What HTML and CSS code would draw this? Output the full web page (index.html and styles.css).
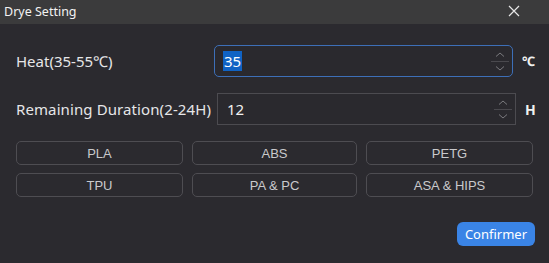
FILE: index.html
```html
<!DOCTYPE html>
<html>
<head>
<meta charset="utf-8">
<link rel="stylesheet" href="styles.css">
</head>
<body>
<div class="window">
  <div class="titlebar">
    <span class="title">Drye Setting</span>
    <svg class="close" width="12" height="12" viewBox="0 0 12 12"><path d="M1 1 L11 11 M11 1 L1 11" stroke="#e6e6e6" stroke-width="1.2" fill="none"/></svg>
  </div>
  <div class="content">
    <div class="row row-heat">
      <div class="label label-heat">Heat(35-55℃)</div>
      <div class="spin spin-focus">
        <span class="value"><span class="sel">35</span></span>
        <div class="arrows">
          <svg width="12" height="7" viewBox="0 0 12 7"><path d="M2 5.5 L6 2 L10 5.5" stroke="#7a7a7e" stroke-width="1" fill="none"/></svg>
          <div class="sep"></div>
          <svg width="12" height="7" viewBox="0 0 12 7"><path d="M2 1.5 L6 5 L10 1.5" stroke="#7a7a7e" stroke-width="1" fill="none"/></svg>
        </div>
      </div>
      <div class="unit">℃</div>
    </div>
    <div class="row row-dur">
      <div class="label label-dur">Remaining Duration(2-24H)</div>
      <div class="spin spin-plain">
        <span class="value">12</span>
        <div class="arrows">
          <svg width="12" height="7" viewBox="0 0 12 7"><path d="M2 5.5 L6 2 L10 5.5" stroke="#7a7a7e" stroke-width="1" fill="none"/></svg>
          <div class="sep"></div>
          <svg width="12" height="7" viewBox="0 0 12 7"><path d="M2 1.5 L6 5 L10 1.5" stroke="#7a7a7e" stroke-width="1" fill="none"/></svg>
        </div>
      </div>
      <div class="unit unit-h">H</div>
    </div>
    <div class="materials">
      <div class="mat">PLA</div>
      <div class="mat">ABS</div>
      <div class="mat">PETG</div>
      <div class="mat">TPU</div>
      <div class="mat">PA &amp; PC</div>
      <div class="mat">ASA &amp; HIPS</div>
    </div>
    <div class="footer">
      <button class="confirm">Confirmer</button>
    </div>
  </div>
</div>
</body>
</html>
```

FILE: styles.css
```css
html, body {
  margin: 0;
  padding: 0;
  background: #2b2a2f;
}
.window {
  width: 549px;
  height: 263px;
  background: #2b2a2f;
  font-family: "Noto Sans", "Open Sans", sans-serif;
  color: #e8e8ea;
  overflow: hidden;
}
.titlebar {
  height: 24px;
  background: #3b3b3c;
  display: flex;
  align-items: center;
  justify-content: space-between;
  padding: 0 29px 0 4px;
  box-sizing: border-box;
}
.title {
  font-size: 12.5px;
  color: #f2f2f2;
  position: relative;
  top: -1px;
}
.close {
  display: block;
  margin-top: -3px;
}
.content {
  padding: 21px 14px 0 16px;
}
.row {
  display: flex;
  align-items: center;
}
.row-heat {
  height: 32px;
}
.row-dur {
  height: 32px;
  margin-top: 16px;
}
.label {
  flex: none;
  font-size: 15px;
  color: #e6e6e8;
}
.label-heat { width: 198px; }
.label-dur { width: 201px; letter-spacing: 0.1px; }
.spin {
  flex: none;
  width: 299px;
  height: 32px;
  box-sizing: border-box;
  display: flex;
  align-items: center;
  background: #2a292e;
}
.spin-focus {
  border: 1px solid #3d6fb8;
  border-radius: 5px;
  padding-left: 8px;
}
.spin-plain {
  border: 1px solid #4c4b50;
  padding-left: 9px;
}
.value {
  flex: 1;
  font-size: 15px;
  color: #f0f0f0;
}
.sel {
  background: #1063c4;
  color: #ffffff;
  padding: 0 1px;
}
.arrows {
  flex: none;
  width: 20px;
  margin-right: 2px;
  display: flex;
  flex-direction: column;
  align-items: center;
  gap: 3px;
}
.arrows svg { display: block; }
.sep {
  width: 18px;
  height: 1px;
  background: #4a494e;
}
.unit {
  margin-left: 9px;
  font-size: 13px;
  font-weight: bold;
  color: #f0f0f0;
}
.unit-h { font-size: 14px; }
.materials {
  margin-top: 16px;
  width: 517px;
  display: grid;
  grid-template-columns: 167px 165px 167px;
  column-gap: 9px;
  row-gap: 8px;
}
.mat {
  height: 24px;
  box-sizing: border-box;
  border: 1px solid #4e4d52;
  border-radius: 5px;
  display: flex;
  align-items: center;
  justify-content: center;
  font-family: "Liberation Sans", Arial, sans-serif;
  font-size: 13px;
  color: #c9c9cc;
}
.footer {
  display: flex;
  justify-content: flex-end;
  width: 519px;
  margin-top: 25px;
}
.confirm {
  width: 78px;
  height: 24px;
  border: none;
  border-radius: 6px;
  background: #3a84e6;
  color: #ffffff;
  font-family: "Noto Sans", "Open Sans", sans-serif;
  font-size: 13px;
  padding: 0;
}
```
